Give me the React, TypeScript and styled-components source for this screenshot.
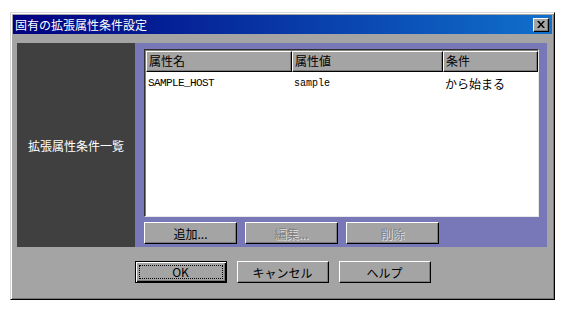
import styled, { createGlobalStyle } from 'styled-components'

const GlobalStyle = createGlobalStyle`
  body {
    margin: 0;
    background: #ffffff;
    font-family: "Noto Sans CJK JP", "Noto Sans", sans-serif;
    font-size: 12px;
  }
`

const Window = styled.div`
  box-sizing: border-box;
  margin: 12px 0 0 10px;
  width: 545px;
  height: 288px;
  background: #a4a4a4;
  border: 1px solid;
  border-color: #d8d8d8 #000000 #000000 #d8d8d8;
  box-shadow: inset 1px 1px #ffffff, inset -1px -1px #7a7a7a;
  padding: 2px;
  display: flex;
  flex-direction: column;
`

const TitleBar = styled.div`
  height: 19px;
  background: linear-gradient(to right, #000080, #1070cc);
  display: flex;
  align-items: center;
  justify-content: space-between;
  padding: 0 3px 0 2px;
`

const Title = styled.span`
  color: #ffffff;
  font-size: 12px;
  line-height: 19px;
`

const CloseButton = styled.div`
  box-sizing: border-box;
  width: 16px;
  height: 14px;
  background: #a4a4a4;
  border: 1px solid;
  border-color: #ffffff #000000 #000000 #ffffff;
  box-shadow: inset -1px -1px #7a7a7a;
  display: flex;
  align-items: center;
  justify-content: center;
`

const Body = styled.div`
  display: flex;
  padding: 9px 5px 0 4px;
`

const SidePanel = styled.div`
  width: 119px;
  height: 204px;
  background: #404040;
  display: flex;
  align-items: center;
  justify-content: center;
  color: #ffffff;
  font-size: 12px;
`

const MainPanel = styled.div`
  width: 412px;
  height: 204px;
  box-sizing: border-box;
  background: #7878b8;
  padding: 6px 8px 0 9px;
  display: flex;
  flex-direction: column;
`

const List = styled.div`
  box-sizing: border-box;
  width: 395px;
  height: 168px;
  background: #ffffff;
  border: 1px solid;
  border-color: #303030 #e8e8e8 #e8e8e8 #303030;
  box-shadow: inset 1px 1px #808080;
  padding: 1px 0 0 1px;
`

const HeaderRow = styled.div`
  display: flex;
  height: 21px;
`

const HeaderCell = styled.div<{ $w: number }>`
  box-sizing: border-box;
  width: ${({ $w }) => $w}px;
  background: #a4a4a4;
  border: 1px solid;
  border-color: #ffffff #000000 #000000 #ffffff;
  box-shadow: inset -1px -1px #7a7a7a;
  padding-left: 2px;
  font-size: 12px;
  line-height: 18px;
  color: #000000;
`

const Row = styled.div`
  display: flex;
  height: 18px;
  align-items: center;
  padding-top: 2px;
`

const Cell = styled.div<{ $w: number; $mono?: boolean; $small?: boolean }>`
  width: ${({ $w }) => $w}px;
  padding-left: 2px;
  box-sizing: border-box;
  font-family: ${({ $mono }) =>
    $mono ? '"Liberation Mono", monospace' : '"Noto Sans CJK JP", sans-serif'};
  font-size: ${({ $mono, $small }) => ($small ? '10px' : $mono ? '11px' : '12px')};
  letter-spacing: ${({ $mono, $small }) => ($mono && !$small ? '-0.6px' : '0')};
  color: #000000;
`

const ActionRow = styled.div`
  display: flex;
  gap: 8px;
  margin-top: 5px;
`

const Button = styled.div<{ $w?: number; $disabled?: boolean; $default?: boolean }>`
  box-sizing: border-box;
  width: ${({ $w }) => $w ?? 93}px;
  height: 22px;
  background: #a4a4a4;
  border: 1px solid;
  border-color: ${({ $default }) =>
    $default ? '#000000' : '#ffffff #000000 #000000 #ffffff'};
  box-shadow: ${({ $default }) =>
    $default
      ? 'inset 1px 1px #ffffff, inset -1px -1px #000000, inset -2px -2px #7a7a7a'
      : 'inset -1px -1px #7a7a7a'};
  display: flex;
  align-items: center;
  justify-content: center;
  font-size: 12px;
  color: ${({ $disabled }) => ($disabled ? '#808080' : '#000000')};
  text-shadow: ${({ $disabled }) => ($disabled ? '1px 1px #e0e0e0' : 'none')};
  padding: ${({ $default }) => ($default ? '3px' : '0')};
`

const FocusRing = styled.div`
  flex: 1;
  align-self: stretch;
  border: 1px dotted #000000;
  display: flex;
  align-items: center;
  justify-content: center;
  line-height: 1;
`

const Footer = styled.div`
  display: flex;
  justify-content: center;
  gap: 10px;
  margin-top: 14px;
`

export default function App() {
  return (
    <>
      <GlobalStyle />
      <Window>
        <TitleBar>
          <Title>固有の拡張属性条件設定</Title>
          <CloseButton>
            <svg width="8" height="7" viewBox="0 0 8 7">
              <path d="M0 0h2l2 2.5L6 0h2L5 3.5 8 7H6L4 4.5 2 7H0l3-3.5z" fill="#000" />
            </svg>
          </CloseButton>
        </TitleBar>
        <Body>
          <SidePanel>拡張属性条件一覧</SidePanel>
          <MainPanel>
            <List>
              <HeaderRow>
                <HeaderCell $w={146}>属性名</HeaderCell>
                <HeaderCell $w={151}>属性値</HeaderCell>
                <HeaderCell $w={95}>条件</HeaderCell>
              </HeaderRow>
              <Row>
                <Cell $w={146} $mono>SAMPLE_HOST</Cell>
                <Cell $w={151} $mono $small>sample</Cell>
                <Cell $w={95}>から始まる</Cell>
              </Row>
            </List>
            <ActionRow>
              <Button>追加...</Button>
              <Button $disabled>編集...</Button>
              <Button $disabled>削除</Button>
            </ActionRow>
          </MainPanel>
        </Body>
        <Footer>
          <Button $w={92} $default>
            <FocusRing>OK</FocusRing>
          </Button>
          <Button $w={92}>キャンセル</Button>
          <Button $w={92}>ヘルプ</Button>
        </Footer>
      </Window>
    </>
  )
}
